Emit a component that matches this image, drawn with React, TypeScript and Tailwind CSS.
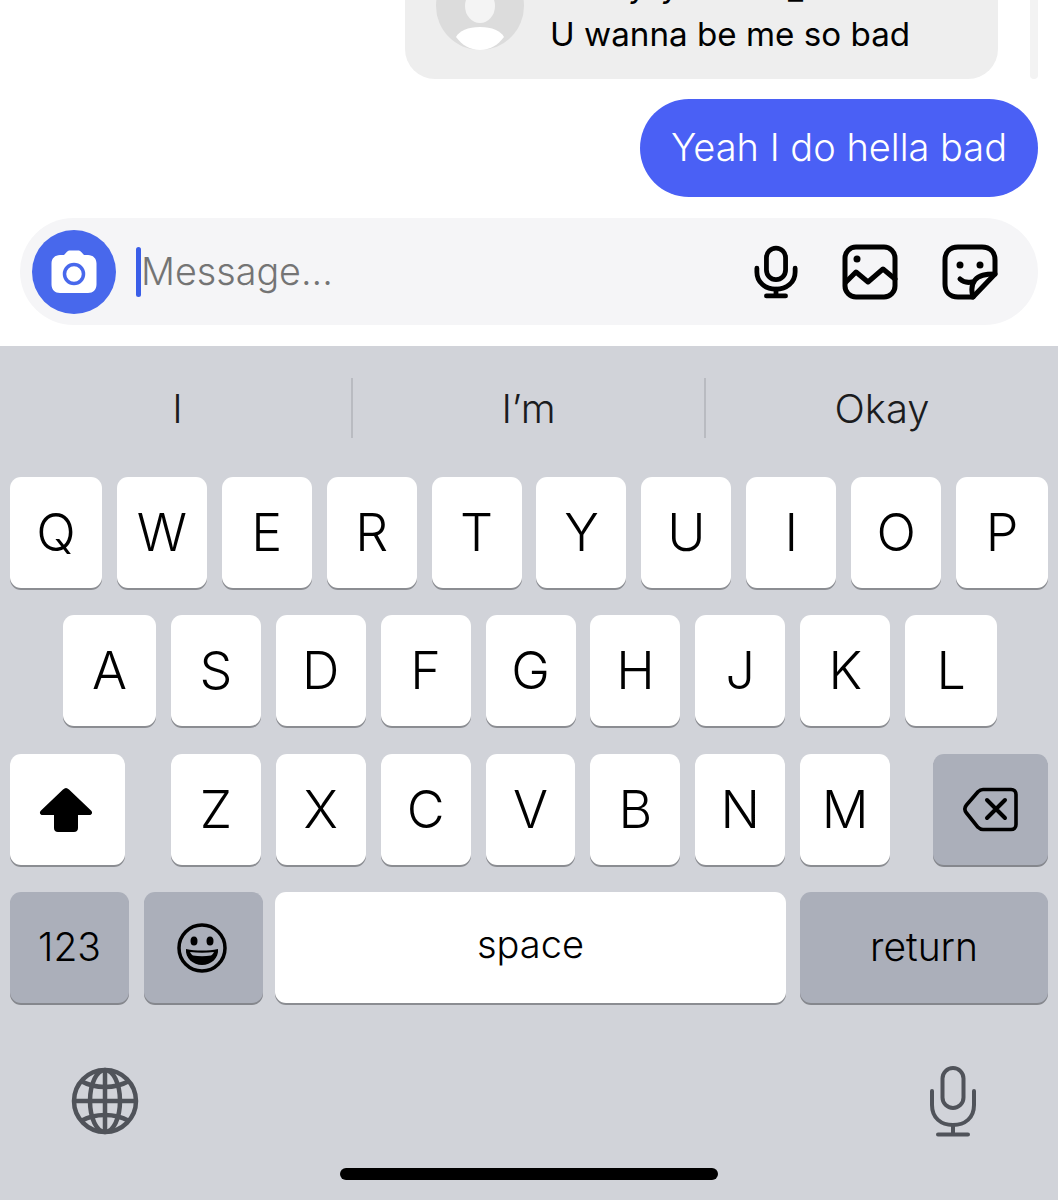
import React from 'react'

const font = "font-['Inter','Liberation_Sans',sans-serif]"

const Key = ({ label, className = '' }: { label: string; className?: string }) => (
  <div
    className={`flex h-[111px] items-center justify-center rounded-[11px] bg-white text-[52px] font-light leading-none text-black shadow-[0_2px_0_#8b8d92] ${className}`}
  >
    {label}
  </div>
)

const DarkKey = ({ children, className = '' }: { children: React.ReactNode; className?: string }) => (
  <div
    className={`flex h-[111px] items-center justify-center rounded-[11px] bg-[#abafba] text-black shadow-[0_2px_0_#85878d] ${className}`}
  >
    {children}
  </div>
)

const CameraIcon = () => (
  <svg width="46" height="44" viewBox="0 0 46 44">
    <path
      d="M9 5h4l2.500-2.800C16.500 1 17.500.5 19 .5h8c1.500 0 2.500.5 3.500 1.700L33 5h4c5 0 8.500 3.500 8.500 8.500v21c0 5-3.500 8.500-8.500 8.500H9c-5 0-8.500-3.500-8.500-8.500v-21C.5 8.500 4 5 9 5z"
      fill="#fff"
    />
    <circle cx="23" cy="24" r="9.500" fill="none" stroke="#4868ec" strokeWidth="3.500" />
  </svg>
)

const MicSmall = () => (
  <svg width="44" height="54" viewBox="0 0 46 56" fill="none" stroke="#000" strokeLinecap="round" strokeWidth="5">
    <rect x="13" y="3" width="20" height="33" rx="10" />
    <path d="M3 24v4c0 11 9 18 20 18s20-7 20-18v-4" />
    <path d="M23 46v7M13 53h20" />
  </svg>
)

const PhotoIcon = () => (
  <svg width="56" height="56" viewBox="0 0 56 56" fill="none" stroke="#000" strokeWidth="5" strokeLinejoin="round" strokeLinecap="round">
    <rect x="3" y="3" width="50" height="50" rx="11" />
    <circle cx="15" cy="15" r="3.500" fill="#000" stroke="none" />
    <path d="M4 38l10-10 12 10 15-13 12 10" />
  </svg>
)

const StickerIcon = () => (
  <svg width="56" height="56" viewBox="0 0 56 56" fill="none" stroke="#000" strokeWidth="5" strokeLinejoin="round" strokeLinecap="round">
    <path d="M31 53H16C8 53 3 48 3 40V16C3 8 8 3 16 3h24c8 0 13 5 13 13v14z" />
    <path d="M31 53c-2-7-2-12 2-17s10-6 20-6" />
    <path d="M18 35c3 3 7 4 12 3" />
    <circle cx="18" cy="21" r="3.500" fill="#000" stroke="none" />
    <circle cx="38" cy="21" r="3.500" fill="#000" stroke="none" />
  </svg>
)

const ShiftIcon = () => (
  <svg width="54" height="46" viewBox="0 0 54 46">
    <path
      d="M27 1c1 0 2 .5 3 1.500l22 21c2 2 1 4.500-1.500 4.500H39v13c0 2.500-1.500 4-4 4H19c-2.500 0-4-1.500-4-4V28H3.500C1 28 0 25.500 2 23.500l22-21C25 1.500 26 1 27 1z"
      fill="#000"
    />
  </svg>
)

const DeleteIcon = () => (
  <svg width="56" height="46" viewBox="0 0 56 46" fill="none" stroke="#000" strokeWidth="3.600" strokeLinecap="round" strokeLinejoin="round">
    <path d="M20 2.500h28c3 0 5 2 5 5v30c0 3-2 5-5 5H20c-2 0-3.500-.7-5-2.200L3.500 26c-2.300-2.800-2.300-5.200 0-8L15 4.700c1.500-1.500 3-2.200 5-2.200z" />
    <path d="M24 13l18 18M42 13L24 31" strokeWidth="4" />
  </svg>
)

const EmojiIcon = () => (
  <svg width="50" height="50" viewBox="0 0 50 50">
    <circle cx="25" cy="25" r="23" fill="none" stroke="#000" strokeWidth="3.500" />
    <ellipse cx="17" cy="18" rx="3.500" ry="4.500" fill="#000" />
    <ellipse cx="33" cy="18" rx="3.500" ry="4.500" fill="#000" />
    <path d="M9 26c10 2 22 2 32 0 1 9-7 16-16 16S8 35 9 26z" fill="#000" />
    <path d="M13 29c8 1 16 1 24 0-1 2-2 3-3 3.500-6 1-12 1-18 0-1-.5-2-1.500-3-3.500z" fill="#abafba" />
  </svg>
)

const GlobeIcon = () => (
  <svg width="68" height="68" viewBox="0 0 68 68" fill="none" stroke="#50535a" strokeWidth="4.500">
    <circle cx="34" cy="34" r="31" />
    <ellipse cx="34" cy="34" rx="15" ry="31" />
    <path d="M34 3v62M3 34h62" />
    <path d="M10 14c14 8 34 8 48 0M10 54c14-8 34-8 48 0" />
  </svg>
)

const MicLarge = () => (
  <svg width="48" height="72" viewBox="0 0 48 72" fill="none" stroke="#50535a" strokeWidth="4" strokeLinecap="round">
    <rect x="13.500" y="3" width="21" height="40" rx="10.500" />
    <path d="M3 26v14c0 13 9 20 21 20s21-7 21-20V26" />
    <path d="M24 60v9M9 69.500h30" />
  </svg>
)

const Avatar = () => (
  <svg width="88" height="51" viewBox="0 0 88 51">
    <circle cx="44" cy="6" r="44" fill="#dcdcdc" />
    <ellipse cx="44" cy="6" rx="15" ry="17" fill="#f4f4f4" />
    <path d="M20 37c3-6 12-10 24-10s21 4 24 10c-6 8-14 13-24 13s-18-5-24-13z" fill="#fff" />
  </svg>
)

const Suggestion = ({ label, className = '' }: { label: string; className?: string }) => (
  <div className={`flex h-[60px] items-center justify-center pt-[2px] text-[40px] font-light text-[#1b1c1e] ${className}`}>
    {label}
  </div>
)

export default function App() {
  const row1 = ['W', 'E', 'R', 'T', 'Y', 'U', 'I', 'O']
  const row2 = ['S', 'D', 'F', 'G', 'H', 'J', 'K']
  const row3 = ['Z', 'X', 'C', 'V', 'B', 'N', 'M']

  return (
    <div className={`flex h-[1200px] w-[1058px] flex-col overflow-hidden bg-white ${font}`}>
      {/* thread */}
      <div className="flex h-[79px] shrink-0 items-stretch justify-end pr-[20px]">
        <div className="flex w-[593px] items-start gap-[26px] rounded-b-[30px] bg-[#eeeeee] pl-[31px]">
          <Avatar />
          <div className="flex flex-col">
            {/* name line above, only the descenders are left in view */}
            <div className="h-[14px] overflow-hidden">
              <div className="mt-[-35px] flex text-[33px] leading-[40px] text-black">
                <span className="ml-[78px]">y</span>
                <span className="ml-[14px]">y</span>
                <span className="ml-[109px] mt-[2px]">_</span>
              </div>
            </div>
            <span className="text-[33.200px] leading-[40px] text-black">U wanna be me so bad</span>
          </div>
        </div>
        <div className="ml-[32px] w-[8px] rounded-b bg-[#f3f3f3]" />
      </div>

      <div className="mr-[20px] mt-[20px] flex h-[98px] w-[398px] shrink-0 items-center justify-center self-end rounded-[49px] bg-[#4a60f5] pb-[2px] text-[38px] font-light text-white">
        Yeah I do hella bad
      </div>

      {/* composer */}
      <div className="ml-[20px] mt-[21px] flex h-[107px] w-[1018px] shrink-0 items-center rounded-[54px] bg-[#f5f5f7] pl-[12px] pr-[40px]">
        <div className="flex h-[84px] w-[84px] items-center justify-center rounded-full bg-[#4868ec]">
          <CameraIcon />
        </div>
        <div className="ml-[20px] h-[50px] w-[5px] rounded-full bg-[#3a5ee8]" />
        <span className="flex-1 text-[37.700px] font-light text-[#747474]">Message...</span>
        <div className="flex items-center gap-[44px]">
          <MicSmall />
          <PhotoIcon />
          <StickerIcon />
        </div>
      </div>

      {/* keyboard */}
      <div className="mt-[21px] flex flex-1 flex-col bg-[#d1d3d9]">
        <div className="mt-[32px] flex">
          <Suggestion label="I" className="w-[351px] pl-[4px]" />
          <Suggestion label="I’m" className="w-[353px] border-l-2 border-[#b9bbc1]" />
          <Suggestion label="Okay" className="flex-1 border-l-2 border-[#b9bbc1]" />
        </div>

        <div className="mt-[39px] flex gap-[14.900px] px-[10px]">
          <Key label="Q" className="w-[92px]" />
          {row1.map((k) => (
            <Key key={k} label={k} className="w-[90px]" />
          ))}
          <Key label="P" className="w-[92px]" />
        </div>

        <div className="mt-[27px] flex gap-[14.900px] pl-[63px]">
          <Key label="A" className="w-[93px]" />
          {row2.map((k) => (
            <Key key={k} label={k} className="w-[90px]" />
          ))}
          <Key label="L" className="w-[92px]" />
        </div>

        <div className="mt-[28px] flex px-[10px]">
          <div className="flex h-[111px] w-[115px] items-center justify-center rounded-[11px] bg-white pr-[4px] shadow-[0_2px_0_#8b8d92]">
            <ShiftIcon />
          </div>
          <div className="ml-[46px] flex w-[719px] gap-[15px]">
            {row3.map((k) => (
              <Key key={k} label={k} className="flex-1" />
            ))}
          </div>
          <DarkKey className="ml-[43px] w-[115px]">
            <DeleteIcon />
          </DarkKey>
        </div>

        <div className="mt-[27px] flex px-[10px]">
          <DarkKey className="w-[119px] text-[39px] font-light">123</DarkKey>
          <DarkKey className="ml-[15px] w-[119px] pr-[3px]">
            <EmojiIcon />
          </DarkKey>
          <div className="ml-[12px] flex h-[111px] w-[511px] items-center justify-center rounded-[11px] bg-white pb-[6px] text-[38px] font-light text-black shadow-[0_2px_0_#8b8d92]">
            space
          </div>
          <DarkKey className="ml-[14px] w-[248px] text-[39px] font-light">return</DarkKey>
        </div>

        <div className="mt-[62px] flex items-center justify-between pl-[71px] pr-[81px]">
          <GlobeIcon />
          <MicLarge />
        </div>

        <div className="mx-auto mt-[31px] h-[12px] w-[378px] rounded-full bg-black" />
      </div>
    </div>
  )
}
